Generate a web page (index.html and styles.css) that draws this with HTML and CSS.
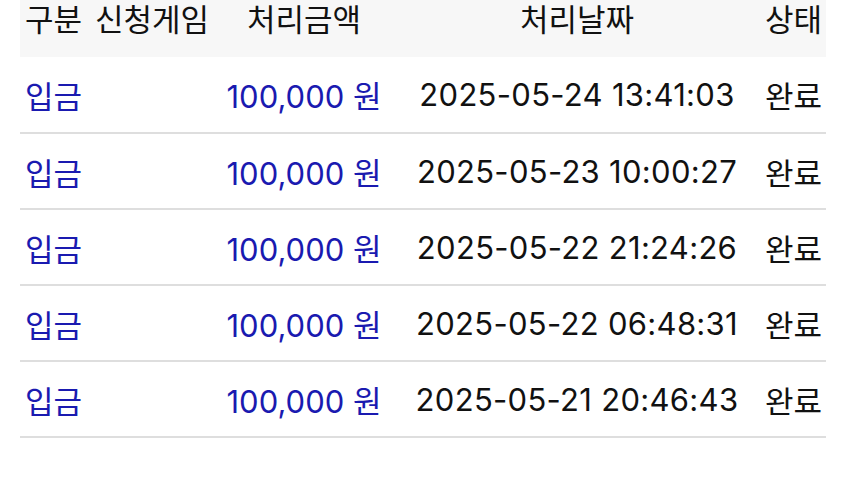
FILE: index.html
```html
<!DOCTYPE html>
<html lang="ko">
<head>
    <meta charset="UTF-8">
    <meta name="viewport" content="width=device-width, initial-scale=1.0">
    <title>입출금 내역</title>
    <link rel="stylesheet" href="styles.css">
</head>
<body>
    <div class="container">
        <table class="history">
            <colgroup>
                <col class="col-type">
                <col class="col-game">
                <col class="col-amount">
                <col class="col-date">
                <col class="col-status">
            </colgroup>
            <thead>
                <tr>
                    <th class="left">구분</th>
                    <th class="left">신청게임</th>
                    <th>처리금액</th>
                    <th>처리날짜</th>
                    <th class="status">상태</th>
                </tr>
            </thead>
            <tbody>
                <tr>
                    <td class="left blue">입금</td>
                    <td></td>
                    <td class="blue">100,000 원</td>
                    <td>2025-05-24 13:41:03</td>
                    <td class="status">완료</td>
                </tr>
                <tr>
                    <td class="left blue">입금</td>
                    <td></td>
                    <td class="blue">100,000 원</td>
                    <td>2025-05-23 10:00:27</td>
                    <td class="status">완료</td>
                </tr>
                <tr>
                    <td class="left blue">입금</td>
                    <td></td>
                    <td class="blue">100,000 원</td>
                    <td>2025-05-22 21:24:26</td>
                    <td class="status">완료</td>
                </tr>
                <tr>
                    <td class="left blue">입금</td>
                    <td></td>
                    <td class="blue">100,000 원</td>
                    <td>2025-05-22 06:48:31</td>
                    <td class="status">완료</td>
                </tr>
                <tr>
                    <td class="left blue">입금</td>
                    <td></td>
                    <td class="blue">100,000 원</td>
                    <td>2025-05-21 20:46:43</td>
                    <td class="status">완료</td>
                </tr>
            </tbody>
        </table>
    </div>
</body>
</html>
```

FILE: styles.css
```css
* {
    margin: 0;
    padding: 0;
    box-sizing: border-box;
}

body {
    font-family: Inter, "Noto Sans CJK KR", sans-serif;
    background-color: #fff;
    color: #111;
}

.container {
    padding: 0 24px 0 20px;
}

.history {
    width: 806px;
    border-collapse: collapse;
    table-layout: fixed;
    font-size: 31px;
}

.col-type { width: 70px; }
.col-game { width: 120px; }
.col-amount { width: 188px; }
.col-date { width: 358px; }
.col-status { width: 70px; }

.history th {
    background: #f7f7f7;
    font-weight: 400;
    height: 57px;
    line-height: 40px;
    padding: 0 0 17px;
    text-align: center;
    white-space: nowrap;
}

.history td {
    height: 76px;
    text-align: center;
    white-space: nowrap;
    border-bottom: 2px solid #dedede;
}

.history td:nth-child(4) {
    letter-spacing: 0.3px;
}

.history .left {
    text-align: left;
    padding-left: 5px;
}

.history .status {
    text-align: right;
    padding-right: 4px;
}

.blue {
    color: #1a1ab0;
}
```
